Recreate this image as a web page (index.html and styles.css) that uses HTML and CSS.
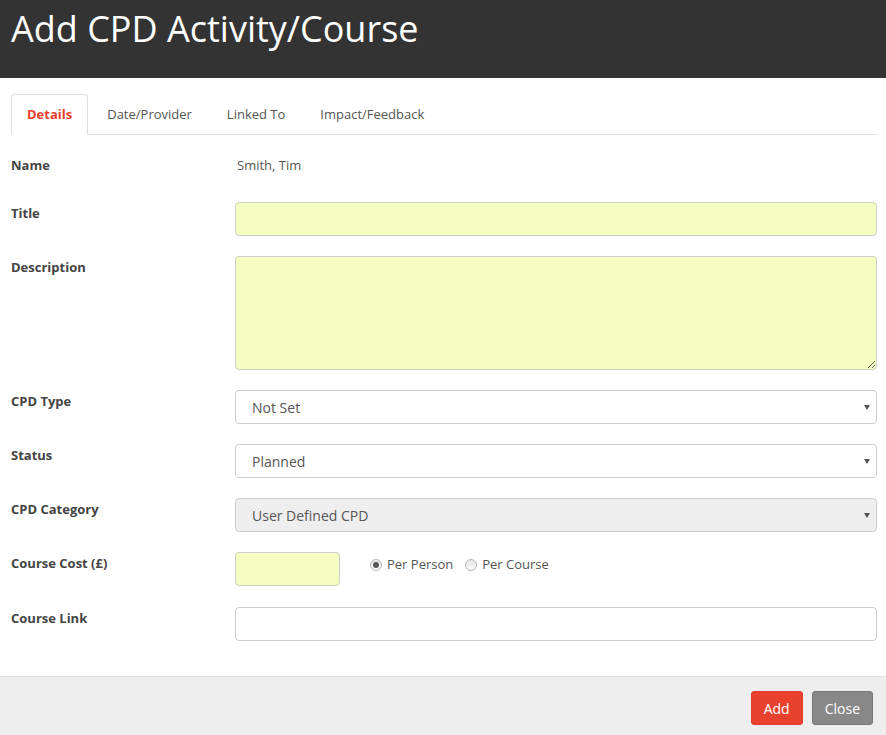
FILE: index.html
```html
<!DOCTYPE html>
<html lang="en">
<head>
<meta charset="utf-8">
<title>Add CPD Activity/Course</title>
<link rel="stylesheet" href="styles.css">
</head>
<body>
<header class="header">
  <h1 class="header-title">Add CPD Activity/Course</h1>
</header>
<main class="main">
  <nav class="tabs">
    <a class="tab tab-active">Details</a>
    <a class="tab">Date/Provider</a>
    <a class="tab">Linked To</a>
    <a class="tab">Impact/Feedback</a>
  </nav>
  <form class="form">
    <div class="row row-name">
      <label class="label label-plain">Name</label>
      <div class="value-text">Smith, Tim</div>
    </div>
    <div class="row">
      <label class="label">Title</label>
      <input class="field field-yellow" type="text">
    </div>
    <div class="row">
      <label class="label">Description</label>
      <textarea class="field field-yellow field-area"></textarea>
    </div>
    <div class="row">
      <label class="label">CPD Type</label>
      <div class="select-wrap"><select class="field field-select"><option>Not Set</option></select></div>
    </div>
    <div class="row">
      <label class="label">Status</label>
      <div class="select-wrap"><select class="field field-select"><option>Planned</option></select></div>
    </div>
    <div class="row">
      <label class="label">CPD Category</label>
      <div class="select-wrap"><select class="field field-select field-disabled" disabled><option>User Defined CPD</option></select></div>
    </div>
    <div class="row row-cost">
      <label class="label">Course Cost (£)</label>
      <div class="cost-group">
        <input class="field field-yellow field-cost" type="text">
        <div class="radios">
          <span class="radio radio-checked"></span><span class="radio-text">Per Person</span>
          <span class="radio"></span><span class="radio-text">Per Course</span>
        </div>
      </div>
    </div>
    <div class="row">
      <label class="label">Course Link</label>
      <input class="field" type="text">
    </div>
  </form>
</main>
<footer class="footer">
  <button class="btn btn-add" type="button">Add</button>
  <button class="btn btn-close" type="button">Close</button>
</footer>
</body>
</html>
```

FILE: styles.css
```css
* { box-sizing: border-box; }
html, body { margin: 0; padding: 0; background: #fff; }
body {
  font-family: "Open Sans", "Noto Sans", sans-serif;
  color: #555;
  width: 886px;
  height: 735px;
  overflow: hidden;
}
.header {
  height: 78px;
  background: #333;
  padding: 4px 11px 0;
}
.header-title {
  margin: 0;
  font-size: 36px;
  font-weight: 400;
  line-height: 49px;
  color: #fff;
}
.main {
  padding: 16px 9px 15px 11px;
}
.tabs {
  display: flex;
  border-bottom: 1px solid #ddd;
  height: 41px;
}
.tab {
  height: 41px;
  padding: 0 15px;
  margin-right: 3px;
  font-size: 13px;
  line-height: 39px;
  color: #555;
  border: 1px solid transparent;
  border-radius: 4px 4px 0 0;
}
.tab-active {
  color: #e8412d;
  font-weight: 700;
  border-color: #ddd #ddd #fff;
  background: #fff;
}
.form { display: block; }
.row {
  display: grid;
  grid-template-columns: 224px 1fr;
  margin-bottom: 20px;
}
.row-name {
  margin-top: 22px;
  margin-bottom: 28px;
}
.label {
  font-size: 13px;
  font-weight: 700;
  color: #444;
  line-height: 17px;
  padding-top: 3px;
}
.label-plain { padding-top: 0; }
.value-text {
  font-size: 13px;
  line-height: 17px;
  color: #555;
  padding-left: 2px;
}
.field {
  display: block;
  width: 100%;
  height: 34px;
  margin: 0;
  border: 1px solid #ccc;
  border-radius: 4px;
  background: #fff;
  font-family: "Open Sans", "Noto Sans", sans-serif;
  font-size: 14px;
  color: #555;
  padding: 0 16px;
  outline: none;
}
.field-yellow { background: #f5fdc1; }
.field-area {
  height: 114px;
  resize: vertical;
  padding: 6px 16px;
}
.select-wrap { position: relative; }
.select-wrap::after {
  content: "";
  position: absolute;
  right: 7px;
  top: 15px;
  border-left: 3px solid transparent;
  border-right: 3px solid transparent;
  border-top: 5px solid #555;
  pointer-events: none;
}
.field-select {
  appearance: none;
  -webkit-appearance: none;
}
.field-disabled {
  background: #eee;
  color: #555;
  opacity: 1;
}
.row-cost { margin-bottom: 21px; }
.cost-group {
  display: flex;
  align-items: flex-start;
}
.field-cost {
  width: 105px;
  flex: none;
}
.radios {
  display: flex;
  align-items: center;
  margin-left: 30px;
  padding-top: 4px;
  font-size: 13px;
  line-height: 17px;
}
.radio {
  width: 12px;
  height: 12px;
  border-radius: 50%;
  border: 1px solid #b5b5b5;
  background: linear-gradient(#e6e6e6, #fafafa);
  margin-right: 5px;
  position: relative;
}
.radio-checked::after {
  content: "";
  position: absolute;
  left: 2px;
  top: 2px;
  width: 6px;
  height: 6px;
  border-radius: 50%;
  background: #555;
}
.radio-text {
  color: #555;
  margin-right: 12px;
}
.footer {
  border-top: 1px solid #ddd;
  background: #eee;
  height: 59px;
  padding: 14px 13px 0 0;
  display: flex;
  justify-content: flex-end;
  gap: 9px;
}
.btn {
  height: 34px;
  border-radius: 3px;
  font-family: "Open Sans", "Noto Sans", sans-serif;
  font-size: 14px;
  color: #fff;
  padding: 0 12px;
  cursor: pointer;
}
.btn-add {
  background: #e8412d;
  border: 1px solid #de3a26;
}
.btn-close {
  background: #888;
  border: 1px solid #777;
}
```
